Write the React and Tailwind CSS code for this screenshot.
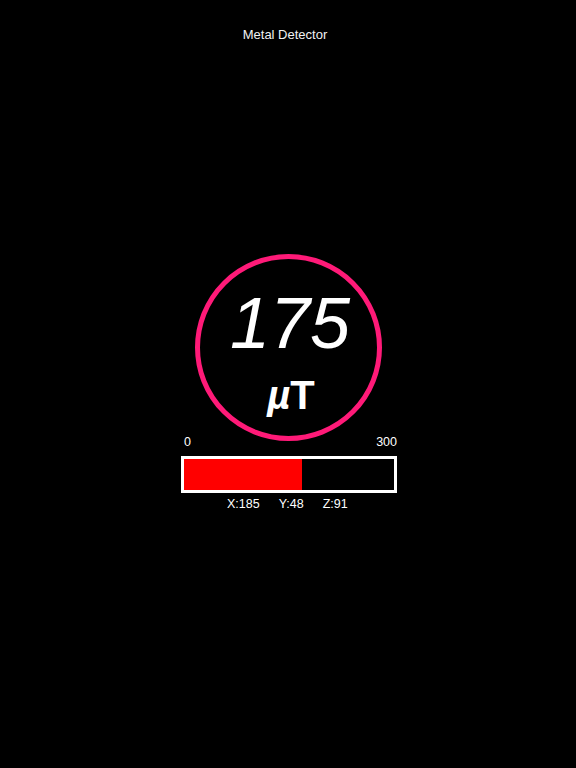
export default function App() {
  const font = { fontFamily: '"Liberation Sans", Arial, sans-serif' };
  return (
    <div className="w-[576px] h-[768px] bg-black text-white overflow-hidden" style={font}>
      <div className="pt-[28px] pr-[6px] text-center text-[13px] leading-none text-[#f2f2f2]">Metal Detector</div>
      <div className="mt-[213px] flex justify-center">
        <div className="w-[187px] h-[187px] rounded-full border-[5px] border-[#ff1a78] flex flex-col items-center">
          <div className="mt-[28px] text-[72px] leading-none italic pl-[4px]">175</div>
          <div className="mt-[16px] text-[40px] leading-none font-bold pl-[6px]">
            <span className="italic">µ</span>T
          </div>
        </div>
      </div>
      <div className="ml-[181px] w-[216px]">
        <div className="-mt-[5px] flex justify-between pl-[3px] text-[12.5px] leading-none">
          <span>0</span>
          <span>300</span>
        </div>
        <div className="mt-[7px] h-[37px] border-[3px] border-white flex">
          <div className="w-[118px] h-full bg-[#ff0000]" />
        </div>
        <div className="mt-[5px] flex pl-[46px] gap-[19px] text-[12.5px] leading-none">
          <span>X:185</span>
          <span>Y:48</span>
          <span>Z:91</span>
        </div>
      </div>
    </div>
  );
}
